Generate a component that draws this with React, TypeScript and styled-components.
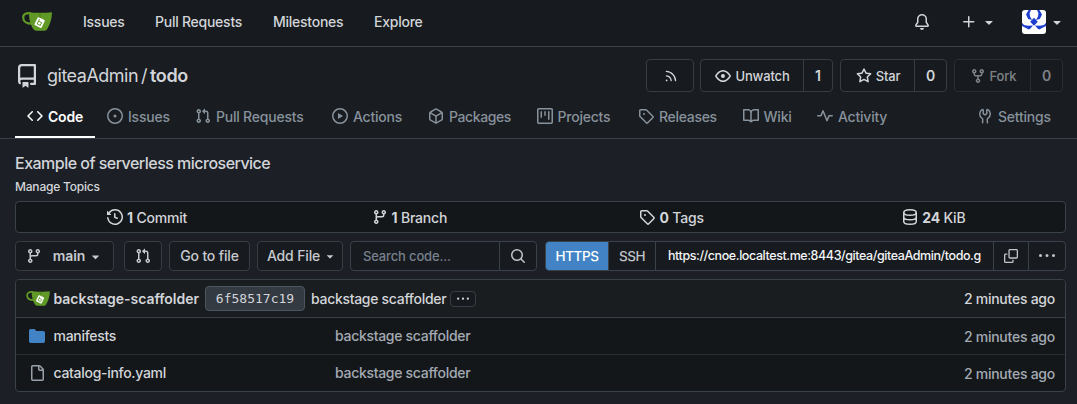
import React from "react";
import styled, { createGlobalStyle, css } from "styled-components";

const Global = createGlobalStyle`
  * { box-sizing: border-box; }
  html, body { margin: 0; background: #1c1f25; }
  body {
    font-family: Inter, "Liberation Sans", sans-serif;
    font-size: 14px;
    font-weight: 450;
    line-height: 20px;
    color: #d2d5d9;
    overflow: hidden;
  }
`;

const paths = {
  code: "m11.28 3.22 4.25 4.25a.75.75 0 0 1 0 1.06l-4.25 4.25a.749.749 0 0 1-1.275-.326.749.749 0 0 1 .215-.734L13.94 8l-3.72-3.72a.749.749 0 0 1 .326-1.275.749.749 0 0 1 .734.215Zm-6.56 0a.751.751 0 0 1 1.042.018.751.751 0 0 1 .018 1.042L2.06 8l3.72 3.72a.749.749 0 0 1-.326 1.275.749.749 0 0 1-.734-.215L.47 8.53a.75.75 0 0 1 0-1.06Z",
  issue: "M8 9.5a1.5 1.5 0 1 0 0-3 1.5 1.5 0 0 0 0 3ZM8 0a8 8 0 1 1 0 16A8 8 0 0 1 8 0ZM1.5 8a6.5 6.5 0 1 0 13 0 6.5 6.5 0 0 0-13 0Z",
  pull: "M1.5 3.25a2.25 2.25 0 1 1 3 2.122v5.256a2.251 2.251 0 1 1-1.5 0V5.372A2.25 2.25 0 0 1 1.5 3.25Zm5.677-.177L9.573.677A.25.25 0 0 1 10 .854V2.5h1A2.5 2.5 0 0 1 13.5 5v5.628a2.251 2.251 0 1 1-1.5 0V5a1 1 0 0 0-1-1h-1v1.646a.25.25 0 0 1-.427.177L7.177 3.427a.25.25 0 0 1 0-.354ZM3.75 2.5a.75.75 0 1 0 0 1.5.75.75 0 0 0 0-1.5Zm0 9.5a.75.75 0 1 0 0 1.5.75.75 0 0 0 0-1.5Zm8.25.75a.75.75 0 1 0 1.5 0 .75.75 0 0 0-1.5 0Z",
  play: "M8 0a8 8 0 1 1 0 16A8 8 0 0 1 8 0ZM1.5 8a6.5 6.5 0 1 0 13 0 6.5 6.5 0 0 0-13 0Zm4.879-2.773 4.264 2.559a.25.25 0 0 1 0 .428l-4.264 2.559A.25.25 0 0 1 6 10.559V5.442a.25.25 0 0 1 .379-.215Z",
  pkg: "m8.878.392 5.25 3.045c.54.314.872.89.872 1.514v6.098a1.75 1.75 0 0 1-.872 1.514l-5.25 3.045a1.75 1.75 0 0 1-1.756 0l-5.25-3.045A1.75 1.75 0 0 1 1 11.049V4.951c0-.624.332-1.201.872-1.514L7.122.392a1.75 1.75 0 0 1 1.756 0ZM7.875 1.69l-4.63 2.685L8 7.133l4.755-2.758-4.63-2.685a.248.248 0 0 0-.25 0ZM2.5 5.677v5.372c0 .09.047.171.125.216l4.625 2.683V8.432Zm6.25 8.271 4.625-2.683a.25.25 0 0 0 .125-.216V5.677L8.75 8.432Z",
  project: "M1.75 0h12.5C15.216 0 16 .784 16 1.75v12.5A1.75 1.75 0 0 1 14.25 16H1.75A1.75 1.75 0 0 1 0 14.25V1.75C0 .784.784 0 1.75 0ZM1.5 1.75v12.5c0 .138.112.25.25.25h12.5a.25.25 0 0 0 .25-.25V1.75a.25.25 0 0 0-.25-.25H1.75a.25.25 0 0 0-.25.25ZM11.75 3a.75.75 0 0 1 .75.75v7.5a.75.75 0 0 1-1.5 0v-7.5a.75.75 0 0 1 .75-.75Zm-8.25.75a.75.75 0 0 1 1.5 0v5.5a.75.75 0 0 1-1.5 0ZM8 3a.75.75 0 0 1 .75.75v3.5a.75.75 0 0 1-1.5 0v-3.5A.75.75 0 0 1 8 3Z",
  tag: "M1 7.775V2.75C1 1.784 1.784 1 2.75 1h5.025c.464 0 .91.184 1.238.513l6.25 6.25a1.75 1.75 0 0 1 0 2.474l-5.026 5.026a1.75 1.75 0 0 1-2.474 0l-6.25-6.25A1.752 1.752 0 0 1 1 7.775Zm1.5 0c0 .066.026.13.073.177l6.25 6.25a.25.25 0 0 0 .354 0l5.025-5.025a.25.25 0 0 0 0-.354l-6.25-6.25a.25.25 0 0 0-.177-.073H2.75a.25.25 0 0 0-.25.25ZM6 5a1 1 0 1 1 0 2 1 1 0 0 1 0-2Z",
  book: "M0 1.75A.75.75 0 0 1 .75 1h4.253c1.227 0 2.317.59 3 1.501A3.743 3.743 0 0 1 11.006 1h4.245a.75.75 0 0 1 .75.75v10.5a.75.75 0 0 1-.75.75h-4.507a2.25 2.25 0 0 0-1.591.659l-.622.621a.75.75 0 0 1-1.06 0l-.622-.621A2.25 2.25 0 0 0 5.258 13H.75a.75.75 0 0 1-.75-.75Zm7.251 10.324.004-5.073-.002-2.253A2.25 2.25 0 0 0 5.003 2.5H1.5v9h3.757a3.75 3.75 0 0 1 1.994.574ZM8.755 4.75l-.004 7.322a3.752 3.752 0 0 1 1.992-.572H14.5v-9h-3.495a2.25 2.25 0 0 0-2.25 2.25Z",
  pulse: "M6 2c.306 0 .582.187.696.471L10 10.731l1.304-3.26A.751.751 0 0 1 12 7h3.25a.75.75 0 0 1 0 1.5h-2.742l-1.812 4.528a.751.751 0 0 1-1.392 0L6 4.77 4.696 8.03A.75.75 0 0 1 4 8.5H.75a.75.75 0 0 1 0-1.5h2.742l1.812-4.529A.751.751 0 0 1 6 2Z",
  tools: "M5.433 2.304A4.492 4.492 0 0 0 3.5 6c0 1.598.832 3.002 2.09 3.802.518.328.929.923.902 1.64v.008l-.164 3.337a.75.75 0 1 1-1.498-.073l.163-3.33c.002-.085-.05-.216-.207-.316A5.996 5.996 0 0 1 2 6a5.993 5.993 0 0 1 2.567-4.92 1.482 1.482 0 0 1 1.673-.04c.462.296.76.827.76 1.423v2.82c0 .082.041.16.11.206l.75.51a.25.25 0 0 0 .28 0l.75-.51A.249.249 0 0 0 9 5.282V2.463c0-.596.298-1.127.76-1.423a1.482 1.482 0 0 1 1.673.04A5.993 5.993 0 0 1 14 6a5.996 5.996 0 0 1-2.786 5.068c-.157.1-.209.23-.207.315l.163 3.33a.752.752 0 0 1-1.094.714.75.75 0 0 1-.404-.64l-.164-3.345c-.027-.717.384-1.312.902-1.64A4.495 4.495 0 0 0 12.5 6a4.492 4.492 0 0 0-1.933-3.696c-.024.017-.067.067-.067.16v2.818a1.75 1.75 0 0 1-.767 1.448l-.75.51a1.75 1.75 0 0 1-1.966 0l-.75-.51A1.75 1.75 0 0 1 5.5 5.282V2.463c0-.092-.043-.142-.067-.159Z",
  bell: "M8 16a2 2 0 0 0 1.985-1.75c.017-.137-.097-.25-.235-.25h-3.5c-.138 0-.252.113-.235.25A2 2 0 0 0 8 16ZM3 5a5 5 0 0 1 10 0v2.947c0 .05.015.098.042.139l1.703 2.555A1.519 1.519 0 0 1 13.482 13H2.518a1.516 1.516 0 0 1-1.263-2.36l1.703-2.554A.255.255 0 0 0 3 7.947Zm5-3.5A3.5 3.5 0 0 0 4.5 5v2.947c0 .346-.102.683-.294.97l-1.703 2.556a.017.017 0 0 0-.003.01l.001.006c0 .002.002.004.004.006l.006.004.007.001h10.964l.007-.001.006-.004.004-.006.001-.007a.017.017 0 0 0-.003-.01l-1.703-2.554a1.745 1.745 0 0 1-.294-.97V5A3.5 3.5 0 0 0 8 1.5Z",
  plus: "M7.75 2a.75.75 0 0 1 .75.75V7h4.25a.75.75 0 0 1 0 1.5H8.5v4.25a.75.75 0 0 1-1.5 0V8.5H2.75a.75.75 0 0 1 0-1.5H7V2.75A.75.75 0 0 1 7.75 2Z",
  rss: "M2.002 2.725a.75.75 0 0 1 .797-.699C8.79 2.42 13.58 7.21 13.974 13.201a.75.75 0 0 1-1.497.098 10.502 10.502 0 0 0-9.776-9.776.747.747 0 0 1-.7-.798ZM2.84 7.05h-.002a7.002 7.002 0 0 1 6.113 6.111.75.75 0 0 1-1.49.178 5.503 5.503 0 0 0-4.8-4.8.75.75 0 0 1 .179-1.489ZM2 13a1 1 0 1 1 2 0 1 1 0 0 1-2 0Z",
  eye: "M8 2c1.981 0 3.671.992 4.933 2.078 1.27 1.091 2.187 2.345 2.637 3.023a1.62 1.62 0 0 1 0 1.798c-.45.678-1.367 1.932-2.637 3.023C11.67 13.008 9.981 14 8 14c-1.981 0-3.671-.992-4.933-2.078C1.797 10.83.88 9.576.43 8.898a1.62 1.62 0 0 1 0-1.798c.45-.677 1.367-1.931 2.637-3.022C4.33 2.992 6.019 2 8 2ZM1.679 7.932a.12.12 0 0 0 0 .136c.411.622 1.241 1.75 2.366 2.717C5.176 11.758 6.527 12.5 8 12.5c1.473 0 2.825-.742 3.955-1.715 1.124-.967 1.954-2.096 2.366-2.717a.12.12 0 0 0 0-.136c-.412-.621-1.242-1.75-2.366-2.717C10.824 4.242 9.473 3.5 8 3.5c-1.473 0-2.825.742-3.955 1.715-1.124.967-1.954 2.096-2.366 2.717ZM8 10a2 2 0 1 1-.001-3.999A2 2 0 0 1 8 10Z",
  star: "M8 .25a.75.75 0 0 1 .673.418l1.882 3.815 4.21.612a.75.75 0 0 1 .416 1.279l-3.046 2.97.719 4.192a.751.751 0 0 1-1.088.791L8 12.347l-3.766 1.98a.75.75 0 0 1-1.088-.79l.72-4.194L.818 6.374a.75.75 0 0 1 .416-1.28l4.21-.611L7.327.668A.75.75 0 0 1 8 .25Zm0 2.445L6.615 5.5a.75.75 0 0 1-.564.41l-3.097.45 2.24 2.184a.75.75 0 0 1 .216.664l-.528 3.084 2.769-1.456a.75.75 0 0 1 .698 0l2.77 1.456-.53-3.084a.75.75 0 0 1 .216-.664l2.24-2.183-3.096-.45a.75.75 0 0 1-.564-.41L8 2.694Z",
  fork: "M5 5.372v.878c0 .414.336.75.75.75h4.5a.75.75 0 0 0 .75-.75v-.878a2.25 2.25 0 1 1 1.5 0v.878a2.25 2.25 0 0 1-2.25 2.25h-1.5v2.128a2.251 2.251 0 1 1-1.5 0V8.5h-1.5A2.25 2.25 0 0 1 3.5 6.25v-.878a2.25 2.25 0 1 1 1.5 0ZM5 3.25a.75.75 0 1 0-1.5 0 .75.75 0 0 0 1.5 0Zm6.75.75a.75.75 0 1 0 0-1.5.75.75 0 0 0 0 1.5Zm-3 8.75a.75.75 0 1 0-1.5 0 .75.75 0 0 0 1.5 0Z",
  history: "m.427 1.927 1.215 1.215a8.002 8.002 0 1 1-1.6 5.685.75.75 0 1 1 1.493-.154 6.5 6.5 0 1 0 1.18-4.458l1.358 1.358A.25.25 0 0 1 3.896 6H.25A.25.25 0 0 1 0 5.75V2.104a.25.25 0 0 1 .427-.177ZM7.75 4a.75.75 0 0 1 .75.75v2.992l2.028.812a.75.75 0 0 1-.557 1.392l-2.5-1A.751.751 0 0 1 7 8.25v-3.5A.75.75 0 0 1 7.75 4Z",
  branch: "M9.5 3.25a2.25 2.25 0 1 1 3 2.122V6A2.5 2.5 0 0 1 10 8.5H6a1 1 0 0 0-1 1v1.128a2.251 2.251 0 1 1-1.5 0V5.372a2.25 2.25 0 1 1 1.5 0v1.836A2.493 2.493 0 0 1 6 7h4a1 1 0 0 0 1-1v-.628A2.25 2.25 0 0 1 9.5 3.25Zm-6 0a.75.75 0 1 0 1.5 0 .75.75 0 0 0-1.5 0Zm8.25-.75a.75.75 0 1 0 0 1.5.75.75 0 0 0 0-1.5ZM4.25 12a.75.75 0 1 0 0 1.5.75.75 0 0 0 0-1.5Z",
  search: "M10.68 11.74a6 6 0 0 1-7.922-8.982 6 6 0 0 1 8.982 7.922l3.04 3.04a.749.749 0 0 1-.326 1.275.749.749 0 0 1-.734-.215ZM11.5 7a4.499 4.499 0 1 0-8.997 0A4.499 4.499 0 0 0 11.5 7Z",
  copy: "M0 6.75C0 5.784.784 5 1.75 5h1.5a.75.75 0 0 1 0 1.5h-1.5a.25.25 0 0 0-.25.25v7.5c0 .138.112.25.25.25h7.5a.25.25 0 0 0 .25-.25v-1.5a.75.75 0 0 1 1.5 0v1.5A1.75 1.75 0 0 1 9.25 16h-7.5A1.75 1.75 0 0 1 0 14.25ZM5 1.75C5 .784 5.784 0 6.75 0h7.5C15.216 0 16 .784 16 1.75v7.5A1.75 1.75 0 0 1 14.25 11h-7.5A1.75 1.75 0 0 1 5 9.25Zm1.75-.25a.25.25 0 0 0-.25.25v7.5c0 .138.112.25.25.25h7.5a.25.25 0 0 0 .25-.25v-7.5a.25.25 0 0 0-.25-.25Z",
  dots: "M8 9a1.5 1.5 0 1 0 0-3 1.5 1.5 0 0 0 0 3ZM1.5 9a1.5 1.5 0 1 0 0-3 1.5 1.5 0 0 0 0 3Zm13 0a1.5 1.5 0 1 0 0-3 1.5 1.5 0 0 0 0 3Z",
  folder: "M1.75 1A1.75 1.75 0 0 0 0 2.75v10.5C0 14.216.784 15 1.75 15h12.5A1.75 1.75 0 0 0 16 13.25v-8.5A1.75 1.75 0 0 0 14.25 3H7.5a.25.25 0 0 1-.2-.1l-.9-1.2C6.07 1.26 5.55 1 5 1H1.75Z",
  file: "M2 1.75C2 .784 2.784 0 3.75 0h6.586c.464 0 .909.184 1.237.513l2.914 2.914c.329.328.513.773.513 1.237v9.586A1.75 1.75 0 0 1 13.25 16h-9.5A1.75 1.75 0 0 1 2 14.25Zm1.75-.25a.25.25 0 0 0-.25.25v12.5c0 .138.112.25.25.25h9.5a.25.25 0 0 0 .25-.25V6h-2.75A1.75 1.75 0 0 1 9 4.25V1.5Zm6.75.062V4.25c0 .138.112.25.25.25h2.688l-.011-.013-2.914-2.914-.013-.011Z",
  repo: "M2 2.5A2.5 2.5 0 0 1 4.5 0h8.75a.75.75 0 0 1 .75.75v12.5a.75.75 0 0 1-.75.75h-2.5a.75.75 0 0 1 0-1.5h1.75v-2h-8a1 1 0 0 0-.714 1.7.75.75 0 1 1-1.072 1.05A2.495 2.495 0 0 1 2 11.5Zm10.5-1h-8a1 1 0 0 0-1 1v6.708A2.486 2.486 0 0 1 4.5 9h8ZM5 12.25a.25.25 0 0 1 .25-.25h3.5a.25.25 0 0 1 .25.25v3.25a.25.25 0 0 1-.4.2l-1.45-1.087a.249.249 0 0 0-.3 0L5.4 15.7a.25.25 0 0 1-.4-.2Z",
  caret: "m4.427 7.427 3.396 3.396a.25.25 0 0 0 .354 0l3.396-3.396A.25.25 0 0 0 11.396 7H4.604a.25.25 0 0 0-.177.427Z",
};

type IconName = keyof typeof paths;

const Svg = styled.svg`
  display: block;
  flex: none;
  fill: currentColor;
`;

const Icon = ({ name, size = 16 }: { name: IconName; size?: number }) => (
  <Svg width={size} height={size} viewBox="0 0 16 16" aria-hidden="true">
    <path d={paths[name]} />
  </Svg>
);

const DatabaseIcon = () => (
  <Svg width="16" height="16" viewBox="0 0 16 16" aria-hidden="true">
    <g fill="none" stroke="currentColor" strokeWidth="1.5">
      <ellipse cx="8" cy="3.5" rx="6.25" ry="2.75" />
      <path d="M1.75 3.5v9c0 1.5 2.8 2.75 6.25 2.75s6.25-1.25 6.25-2.75v-9M1.75 8c0 1.5 2.8 2.75 6.25 2.75S14.25 9.5 14.25 8" />
    </g>
  </Svg>
);

const GiteaLogo = ({ width, height }: { width: number; height: number }) => (
  <Svg width={width} height={height} viewBox="0 0 30 19" aria-hidden="true">
    <path
      d="M9 1.4C5 .8 1.200 1.500 1.200 5.400c0 4 3.600 6.300 8.600 6.300"
      fill="none"
      stroke="#609926"
      strokeWidth="2.2"
    />
    <path
      d="M7.3.3c3.5.7 17.5.8 22 0 .4 0 .7.2.7.7-.2 6-2 11.5-4.6 15.8-.7 1.2-1.5 1.9-2.8 1.9h-8.5c-1.3 0-2.2-.8-3-1.9C8.5 13 6.5 6 7.3.3Z"
      fill="#609926"
    />
    <path d="M18 .8v5" stroke="#47761a" strokeWidth=".8" />
    <g transform="rotate(26 17.6 10.6)">
      <rect x="13.6" y="6.200" width="8" height="8.800" rx="1.200" fill="#fff" />
      <path d="M16 7.600v5.200h3.400v-3H16" fill="none" stroke="#609926" strokeWidth=".9" />
    </g>
  </Svg>
);

const AvatarImage = () => (
  <svg width="24" height="24" viewBox="0 0 24 24" aria-hidden="true">
    <rect width="24" height="24" fill="#fff" />
    <g fill="#1d3fd0">
      <path d="M12 7.800l3.800 4L12 15.800l-3.800-4Z" />
      <path d="M6.600 0h2.400L7.600 3.200l.4 3.300 2 3.500-3.800-1L4 4.600Z" />
      <path d="M17.400 0H15l1.400 3.200-.4 3.300-2 3.500 3.800-1L20 4.600Z" />
      <path d="M0 12.800l2 2.200 4 .8 5-.4-2.800 3.400-1.600.8L3 17.400 0 16Z" />
      <path d="M24 12.800l-2 2.200-4 .8-5-.4 2.800 3.400 1.600.8 3.600-2.200 3-1.400Z" />
    </g>
  </svg>
);

const Page = styled.div`
  display: flex;
  flex-direction: column;
  height: 404px;
  white-space: nowrap;
`;

const TopBar = styled.header`
  display: flex;
  align-items: center;
  height: 47px;
  padding: 0 12px 3px 22px;
  border-bottom: 1px solid #39424a;
  background: #171a1e;
`;

const TopLink = styled.a<{ $width: number }>`
  width: ${(p) => p.$width}px;
  letter-spacing: -0.25px;
`;

const TopNav = styled.nav`
  display: flex;
  flex: 1;
  margin-left: 31px;
`;

const TopActions = styled.div`
  display: flex;
  align-items: center;
`;

const TopAction = styled.div<{ $gap: number; $after: number }>`
  display: flex;
  align-items: center;
  gap: ${(p) => p.$gap}px;
  margin-right: ${(p) => p.$after}px;
`;

const Avatar = styled.div`
  width: 24px;
  height: 24px;
  border-radius: 3px;
  overflow: hidden;
`;

const RepoHeader = styled.section`
  height: 92px;
  padding: 12px 14px 0 15px;
  border-bottom: 1px solid #39424a;
  background: #191c20;
`;

const TitleRow = styled.div`
  display: flex;
  align-items: center;
  height: 33px;
`;

const RepoName = styled.h1`
  display: flex;
  flex: 1;
  align-items: center;
  gap: 8px;
  margin: 0;
  font-size: 18px;
  font-weight: 400;
  line-height: 24px;
`;

const NameText = styled.span`
  letter-spacing: -0.5px;
  strong { font-weight: 600; letter-spacing: -0.4px; }
  i { font-style: normal; margin: 0 3px; }
`;

const RepoActions = styled.div`
  display: flex;
  gap: 7px;
  & > :first-child { margin-right: -1px; }
`;

const buttonFrame = css`
  border: 1px solid #363d44;
  border-radius: 4px;
  background: #171a1e;
`;

const SplitButton = styled.div<{ $faded?: boolean }>`
  ${buttonFrame}
  display: flex;
  height: 33px;
  opacity: ${(p) => (p.$faded ? 0.55 : 1)};
  font-size: 13px;
  letter-spacing: -0.15px;
  color: #d2d5d9;
`;

const SplitMain = styled.div<{ $width: number }>`
  display: flex;
  align-items: center;
  justify-content: center;
  gap: 4px;
  width: ${(p) => p.$width}px;
  padding-left: 1px;
  font-weight: 500;
`;

const SplitCount = styled.div<{ $width: number }>`
  display: flex;
  align-items: center;
  justify-content: center;
  width: ${(p) => p.$width}px;
  border-left: 1px solid #363d44;
  font-weight: 600;
  font-size: 14px;
`;

const Tabs = styled.nav`
  display: flex;
  height: 46px;
`;

const Tab = styled.a<{ $width: number; $active?: boolean; $push?: boolean; $spacing?: number }>`
  display: flex;
  align-items: center;
  gap: 5px;
  width: ${(p) => p.$width}px;
  height: 46px;
  padding: 4px 0 0 12px;
  border-bottom: 2px solid ${(p) => (p.$active ? "#fff" : "transparent")};
  margin-left: ${(p) => (p.$push ? "auto" : 0)};
  color: ${(p) => (p.$active ? "#fff" : "#87929c")};
  font-weight: ${(p) => (p.$active ? 600 : 450)};
  letter-spacing: ${(p) => p.$spacing ?? -0.22}px;
`;

const TabLabel = styled.span`
  padding-top: 2px;
`;

const Content = styled.main`
  display: flex;
  flex-direction: column;
  padding: 13px 11px 0 15px;
`;

const Description = styled.p`
  margin: 0;
  font-size: 16px;
  line-height: 22px;
  letter-spacing: -0.52px;
`;

const Topics = styled.a`
  margin-top: 4px;
  font-size: 12px;
  line-height: 18px;
  letter-spacing: -0.2px;
`;

const Stats = styled.div`
  display: grid;
  grid-template-columns: repeat(4, 1fr);
  height: 32px;
  margin-top: 5px;
  border: 1px solid #39424a;
  border-radius: 4px;
  background: #14171a;
`;

const Stat = styled.a`
  display: flex;
  align-items: center;
  justify-content: center;
  gap: 4px;
  letter-spacing: -0.2px;
  span { padding-top: 2px; }
  strong { font-weight: 700; }
`;

const Toolbar = styled.div`
  display: flex;
  height: 30px;
  margin-top: 8px;
`;

const ToolButton = styled.button<{ $width: number; $after: number; $strong?: boolean }>`
  ${buttonFrame}
  display: flex;
  align-items: center;
  justify-content: center;
  gap: 3px;
  width: ${(p) => p.$width}px;
  margin-right: ${(p) => p.$after}px;
  padding: 0;
  color: #c6cace;
  font: inherit;
  font-weight: ${(p) => (p.$strong ? 600 : 450)};
  letter-spacing: -0.15px;
`;

const ButtonLabel = styled.span<{ $before?: number }>`
  margin-left: ${(p) => p.$before ?? 0}px;
`;

const FieldGroup = styled.div<{ $width: number; $after?: number }>`
  ${buttonFrame}
  display: flex;
  width: ${(p) => p.$width}px;
  margin-right: ${(p) => p.$after ?? 0}px;
  border-color: #39424a;
  overflow: hidden;
`;

const Field = styled.div<{ $muted?: boolean }>`
  display: flex;
  flex: 1;
  align-items: center;
  min-width: 0;
  overflow: hidden;
  padding-left: 12px;
  color: ${(p) => (p.$muted ? "#76818d" : "#f2f4f5")};
  font-size: ${(p) => (p.$muted ? 13 : 12.5)}px;
  letter-spacing: ${(p) => (p.$muted ? -0.15 : -0.42)}px;
`;

const Segment = styled.div<{ $width: number; $active?: boolean; $first?: boolean }>`
  display: flex;
  flex: none;
  align-items: center;
  justify-content: center;
  width: ${(p) => p.$width}px;
  border-left: ${(p) => (p.$first ? "0" : "1px solid #39424a")};
  background: ${(p) => (p.$active ? "#4183c4" : "transparent")};
  color: ${(p) => (p.$active ? "#fff" : "#c0c5c9")};
  font-size: 13.5px;
  letter-spacing: -0.45px;
`;

const Files = styled.div`
  height: 113px;
  margin-top: 8px;
  border: 1px solid #39424a;
  border-radius: 4px;
  background: #14171a;
  overflow: hidden;
`;

const CommitRow = styled.div`
  display: flex;
  align-items: center;
  height: 38px;
  padding: 0 10px;
  border-bottom: 1px solid #39424a;
  background: #1a1d1f;
  letter-spacing: -0.3px;
`;

const Author = styled.strong`
  width: 151.5px;
  margin-left: 3.5px;
  font-weight: 600;
  letter-spacing: -0.03px;
`;

const Sha = styled.code`
  display: flex;
  align-items: center;
  justify-content: center;
  width: 100px;
  height: 25px;
  border: 1px solid #4c565f;
  border-radius: 4px;
  background: #343a42;
  font-family: "DejaVu Sans Mono", monospace;
  font-size: 13px;
  letter-spacing: 0;
`;

const Message = styled.span`
  width: 139px;
  margin-left: 6px;
`;

const More = styled.span`
  display: flex;
  align-items: center;
  justify-content: center;
  width: 26px;
  height: 16px;
  border: 1px solid #363d44;
  border-radius: 4px;
  background: #171a1e;
`;

const Age = styled.span`
  margin-left: auto;
  letter-spacing: -0.25px;
`;

const FileRow = styled.div`
  display: flex;
  align-items: center;
  height: 37px;
  padding: 0 10px 0 13px;
  border-bottom: 1px solid #262c31;
  color: #a3aab3;
  letter-spacing: -0.3px;
  &:last-child { border-bottom: 0; }
`;

const FileIcon = styled.span<{ $folder?: boolean }>`
  margin-right: 8.5px;
  padding-bottom: 1px;
  color: ${(p) => (p.$folder ? "#4183c4" : "#98a1aa")};
`;

const FileName = styled.a`
  width: 281.5px;
  padding-bottom: 1px;
  color: #d2d5d9;
`;

const FileMessage = styled.span`
  padding-bottom: 1px;
`;

const FileAge = styled(Age)`
  padding-top: 1px;
`;

const tabs: { icon: IconName; label: string; width: number; spacing?: number }[] = [
  { icon: "code", label: "Code", width: 80 },
  { icon: "issue", label: "Issues", width: 88 },
  { icon: "pull", label: "Pull Requests", width: 137 },
  { icon: "play", label: "Actions", width: 96 },
  { icon: "pkg", label: "Packages", width: 108.5, spacing: -0.4 },
  { icon: "project", label: "Projects", width: 101.5 },
  { icon: "tag", label: "Releases", width: 104.5, spacing: -0.3 },
  { icon: "book", label: "Wiki", width: 74.5 },
  { icon: "pulse", label: "Activity", width: 92 },
];

export default function App() {
  return (
    <Page>
      <Global />
      <TopBar>
        <GiteaLogo width={30} height={19} />
        <TopNav>
          <TopLink $width={72}>Issues</TopLink>
          <TopLink $width={118}>Pull Requests</TopLink>
          <TopLink $width={101}>Milestones</TopLink>
          <TopLink $width={60}>Explore</TopLink>
        </TopNav>
        <TopActions>
          <TopAction $gap={0} $after={31}><Icon name="bell" /></TopAction>
          <TopAction $gap={4} $after={25}><Icon name="plus" /><Icon name="caret" /></TopAction>
          <TopAction $gap={3} $after={0}>
            <Avatar><AvatarImage /></Avatar>
            <Icon name="caret" />
          </TopAction>
        </TopActions>
      </TopBar>

      <RepoHeader>
        <TitleRow>
          <RepoName>
            <Icon name="repo" size={24} />
            <NameText>giteaAdmin<i>/</i><strong>todo</strong></NameText>
          </RepoName>
          <RepoActions>
            <SplitButton><SplitMain $width={46}><Icon name="rss" size={14} /></SplitMain></SplitButton>
            <SplitButton>
              <SplitMain $width={102}><Icon name="eye" />Unwatch</SplitMain>
              <SplitCount $width={29}>1</SplitCount>
            </SplitButton>
            <SplitButton>
              <SplitMain $width={73}><Icon name="star" />Star</SplitMain>
              <SplitCount $width={32}>0</SplitCount>
            </SplitButton>
            <SplitButton $faded>
              <SplitMain $width={75}><Icon name="fork" />Fork</SplitMain>
              <SplitCount $width={32}>0</SplitCount>
            </SplitButton>
          </RepoActions>
        </TitleRow>
        <Tabs>
          {tabs.map((t, i) => (
            <Tab key={t.label} $width={t.width} $active={i === 0} $spacing={t.spacing}>
              <Icon name={t.icon} /><TabLabel>{t.label}</TabLabel>
            </Tab>
          ))}
          <Tab $width={98} $push><Icon name="tools" /><TabLabel>Settings</TabLabel></Tab>
        </Tabs>
      </RepoHeader>

      <Content>
        <Description>Example of serverless microservice</Description>
        <Topics>Manage Topics</Topics>
        <Stats>
          <Stat><Icon name="history" /><span><strong>1</strong> Commit</span></Stat>
          <Stat><Icon name="branch" /><span><strong>1</strong> Branch</span></Stat>
          <Stat><Icon name="tag" /><span><strong>0</strong> Tags</span></Stat>
          <Stat><DatabaseIcon /><span><strong>24</strong> KiB</span></Stat>
        </Stats>
        <Toolbar>
          <ToolButton $width={99} $after={10} $strong>
            <Icon name="branch" /><ButtonLabel $before={8}>main</ButtonLabel><Icon name="caret" size={15} />
          </ToolButton>
          <ToolButton $width={38} $after={7}><Icon name="pull" /></ToolButton>
          <ToolButton $width={81} $after={7}>Go to file</ToolButton>
          <ToolButton $width={86} $after={7}><ButtonLabel $before={4}>Add File</ButtonLabel><Icon name="caret" size={14} /></ToolButton>
          <FieldGroup $width={187} $after={8}>
            <Field $muted>Search code...</Field>
            <Segment $width={37}><Icon name="search" /></Segment>
          </FieldGroup>
          <FieldGroup $width={521}>
            <Segment $width={62} $active $first>HTTPS</Segment>
            <Segment $width={47}>SSH</Segment>
            <Segment $width={1} />
            <Field>https://cnoe.localtest.me:8443/gitea/giteaAdmin/todo.g</Field>
            <Segment $width={35}><Icon name="copy" size={14} /></Segment>
            <Segment $width={37}><Icon name="dots" /></Segment>
          </FieldGroup>
        </Toolbar>
        <Files>
          <CommitRow>
            <GiteaLogo width={24} height={15} />
            <Author>backstage-scaffolder</Author>
            <Sha>6f58517c19</Sha>
            <Message>backstage scaffolder</Message>
            <More><Icon name="dots" size={12} /></More>
            <Age>2 minutes ago</Age>
          </CommitRow>
          <FileRow>
            <FileIcon $folder><Icon name="folder" /></FileIcon>
            <FileName>manifests</FileName>
            <FileMessage>backstage scaffolder</FileMessage>
            <FileAge>2 minutes ago</FileAge>
          </FileRow>
          <FileRow>
            <FileIcon><Icon name="file" /></FileIcon>
            <FileName>catalog-info.yaml</FileName>
            <FileMessage>backstage scaffolder</FileMessage>
            <FileAge>2 minutes ago</FileAge>
          </FileRow>
        </Files>
      </Content>
    </Page>
  );
}
